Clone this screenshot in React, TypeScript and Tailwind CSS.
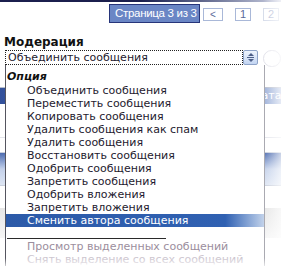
import React from "react";

const items = [
  "Объединить сообщения",
  "Переместить сообщения",
  "Копировать сообщения",
  "Удалить сообщения как спам",
  "Удалить сообщения",
  "Восстановить сообщения",
  "Одобрить сообщения",
  "Запретить сообщения",
  "Одобрить вложения",
  "Запретить вложения",
];

export default function App() {
  return (
    <div className="relative w-[281px] h-[266px] overflow-hidden bg-white font-['DejaVu_Sans',sans-serif] text-[11px] text-[#1e1a2e]">
      {/* top rule */}
      <div className="h-[2px] bg-gradient-to-r from-[#1b1f4d] via-[#1b1f4d] to-[#c9cde0]" />

      {/* pagination */}
      <div className="flex items-start pt-[2px] h-[21px]">
        <div className="ml-[109px] w-[91px] h-[19px] shrink-0 border border-[#27357a] bg-[#6a86c5] text-white font-['Liberation_Sans',sans-serif] text-[11.5px] tracking-[-0.3px] leading-[17px] pl-[5px] whitespace-nowrap overflow-hidden">
          Страница 3 из 3
        </div>
        <div className="ml-[3px] mt-[4px] w-[20px] h-[13px] shrink-0 border border-[#a9b8d8] text-[#5a6a9a] font-['Liberation_Sans',sans-serif] text-[10px] leading-[11px] text-center">
          &lt;
        </div>
        <div className="ml-[12px] mt-[4px] w-[16px] h-[13px] shrink-0 border border-[#a9b8d8] text-[#5a6a9a] font-['Liberation_Sans',sans-serif] text-[11px] leading-[11px] text-center">
          1
        </div>
        <div className="ml-[12px] mt-[4px] w-[16px] h-[13px] shrink-0 border border-[#d6dcea] text-[#b8c0d8] font-['Liberation_Sans',sans-serif] text-[11px] leading-[11px] text-center">
          2
        </div>
      </div>

      {/* heading */}
      <div className="mt-[12px] pl-[4px] h-[15px] font-bold text-[12px] leading-[15px] text-[#111]">
        Модерация
      </div>

      {/* select row */}
      <div className="flex items-start pl-[5px] h-[16px]">
        <div className="w-[242px] h-[15px] border border-dotted border-[#222] pl-[2px] leading-[13px] whitespace-nowrap">
          Объединить сообщения
        </div>
        <div className="w-[15px] h-[15px] border border-[#8ea3c8] rounded-[2px] bg-gradient-to-b from-[#eef4fd] to-[#c3d5f2] flex flex-col items-center justify-center gap-[1px]">
          <div className="w-0 h-0 border-x-[3px] border-x-transparent border-b-[3px] border-b-[#4d5f88]" />
          <div className="w-[7px] h-[1px] bg-[#4d5f88]" />
          <div className="w-0 h-0 border-x-[3px] border-x-transparent border-t-[3px] border-t-[#4d5f88]" />
        </div>
        <div className="ml-[5px] w-[18px] h-[17px] rounded-full border border-[#e2e2ea] shrink-0" />
      </div>

      {/* page underneath */}
      <div className="mt-[21px] h-[1px] bg-[#b5bccc]" />
      <div className="h-[16px] bg-gradient-to-r from-[#33519b] via-[#4b68ad] to-[#a9bbdf] text-white leading-[16px] pl-[253px] whitespace-nowrap">
        Дата
      </div>
      <div className="mt-[33px] h-[1px] bg-[#e4e6ec]" />
      <div className="mt-[14px] h-[1px] bg-[#c9cfdc]" />
      <div className="h-[32px] bg-gradient-to-b from-[#4e6cb0] via-[#c4d1ea] to-[#dde5f3]" />
      <div className="h-[1px] bg-[#c9cfdc]" />
      <div className="mt-[22px] h-[30px] bg-gradient-to-b from-[#e6e6e6] to-[#f6f6f6]" />

      {/* open dropdown list */}
      <div className="absolute left-[5px] top-[65px] w-[260px] h-[210px] bg-white border-l border-[#55555f] border-r border-r-[#a5a5ad] pt-[4px]">
        <div className="h-[15px] pl-[1px] font-bold italic text-[11px] leading-[15px] text-[#111]">
          Опция
        </div>
        {items.map((t) => (
          <div key={t} className="h-[13px] pl-[21px] leading-[13px] whitespace-nowrap">
            {t}
          </div>
        ))}
        <div className="h-[13px] pl-[21px] leading-[13px] whitespace-nowrap text-white bg-gradient-to-r from-[#2c5aa8] via-[#3061b2] via-85% to-[#c2d2ea]">
          Сменить автора сообщения
        </div>
        <div className="h-[13px] relative">
          <div className="absolute left-[1px] top-[11px] w-[159px] h-[1px] bg-[#2a2a2a]" />
        </div>
        <div className="h-[13px] pl-[21px] leading-[13px] whitespace-nowrap text-[#9b8e9d]">
          Просмотр выделенных сообщений
        </div>
        <div className="h-[13px] pl-[21px] leading-[13px] whitespace-nowrap text-[#cdc6cf]">
          Снять выделение со всех сообщений
        </div>
      </div>

      {/* edge fade */}
      <div className="pointer-events-none absolute top-0 right-0 w-[18px] h-full bg-gradient-to-r from-white/0 to-white/70" />
      <div className="pointer-events-none absolute bottom-0 left-0 w-full h-[8px] bg-gradient-to-b from-white/0 to-white/70" />
    </div>
  );
}
